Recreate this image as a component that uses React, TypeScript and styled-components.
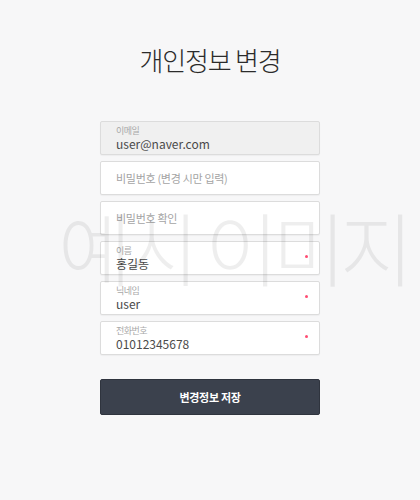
import styled, { createGlobalStyle } from 'styled-components'

const GlobalStyle = createGlobalStyle`
  html, body {
    margin: 0;
    padding: 0;
    background: #f7f7f8;
    font-family: "Noto Sans CJK KR", "Noto Sans", sans-serif;
  }
`

const Page = styled.main`
  position: relative;
  width: 420px;
  height: 500px;
  overflow: hidden;
  display: flex;
  flex-direction: column;
  align-items: center;
`

const Title = styled.h1`
  margin: 40px 0 41px;
  height: 40px;
  line-height: 40px;
  font-size: 26px;
  font-weight: 300;
  letter-spacing: -1.2px;
  color: #2b2b2b;
`

const Form = styled.form`
  width: 220px;
  display: flex;
  flex-direction: column;
  gap: 6px;
`

const Field = styled.div<{ $disabled?: boolean }>`
  position: relative;
  box-sizing: border-box;
  height: 34px;
  padding: 0 15px;
  border: 1px solid #dcdcdc;
  border-radius: 2px;
  background: ${(p) => (p.$disabled ? '#f0f0f0' : '#fff')};
  box-shadow: 0 1px 1px rgba(0, 0, 0, 0.04);
  display: flex;
  flex-direction: column;
  justify-content: center;
`

const Label = styled.span`
  font-size: 9px;
  line-height: 11px;
  color: #a8a8a8;
  letter-spacing: -0.5px;
`

const Value = styled.span`
  font-size: 12px;
  line-height: 16px;
  color: #4a4a4a;
`

const Placeholder = styled.span`
  font-size: 11px;
  line-height: 16px;
  color: #a4a4a4;
  letter-spacing: -0.3px;
`

const Required = styled.i`
  position: absolute;
  right: 11px;
  top: 13px;
  width: 3px;
  height: 3px;
  border-radius: 50%;
  background: #ff4d73;
`

const SaveButton = styled.button`
  margin-top: 18px;
  height: 36px;
  border: 1px solid #2f343e;
  border-radius: 2px;
  background: #3b414d;
  color: #fff;
  font-family: inherit;
  font-size: 11px;
  font-weight: 700;
  letter-spacing: -0.3px;
`

const Watermark = styled.div`
  position: absolute;
  left: 58px;
  top: 195px;
  font-size: 80px;
  line-height: 100px;
  font-weight: 200;
  letter-spacing: -6px;
  white-space: nowrap;
  color: rgba(0, 0, 0, 0.065);
  pointer-events: none;
`

type Info = { label: string; value: string; required?: boolean; disabled?: boolean }

const fields: Info[] = [
  { label: '이메일', value: 'user@naver.com', disabled: true },
  { label: '', value: '비밀번호 (변경 시만 입력)' },
  { label: '', value: '비밀번호 확인' },
  { label: '이름', value: '홍길동', required: true },
  { label: '닉네임', value: 'user', required: true },
  { label: '전화번호', value: '01012345678', required: true },
]

function App() {
  return (
    <Page>
      <GlobalStyle />
      <Title>개인정보 변경</Title>
      <Form onSubmit={(e) => e.preventDefault()}>
        {fields.map((f) => (
          <Field key={f.value} $disabled={f.disabled}>
            {f.label ? (
              <>
                <Label>{f.label}</Label>
                <Value>{f.value}</Value>
              </>
            ) : (
              <Placeholder>{f.value}</Placeholder>
            )}
            {f.required && <Required />}
          </Field>
        ))}
        <SaveButton type="submit">변경정보 저장</SaveButton>
      </Form>
      <Watermark>예시 이미지</Watermark>
    </Page>
  )
}

export default App
